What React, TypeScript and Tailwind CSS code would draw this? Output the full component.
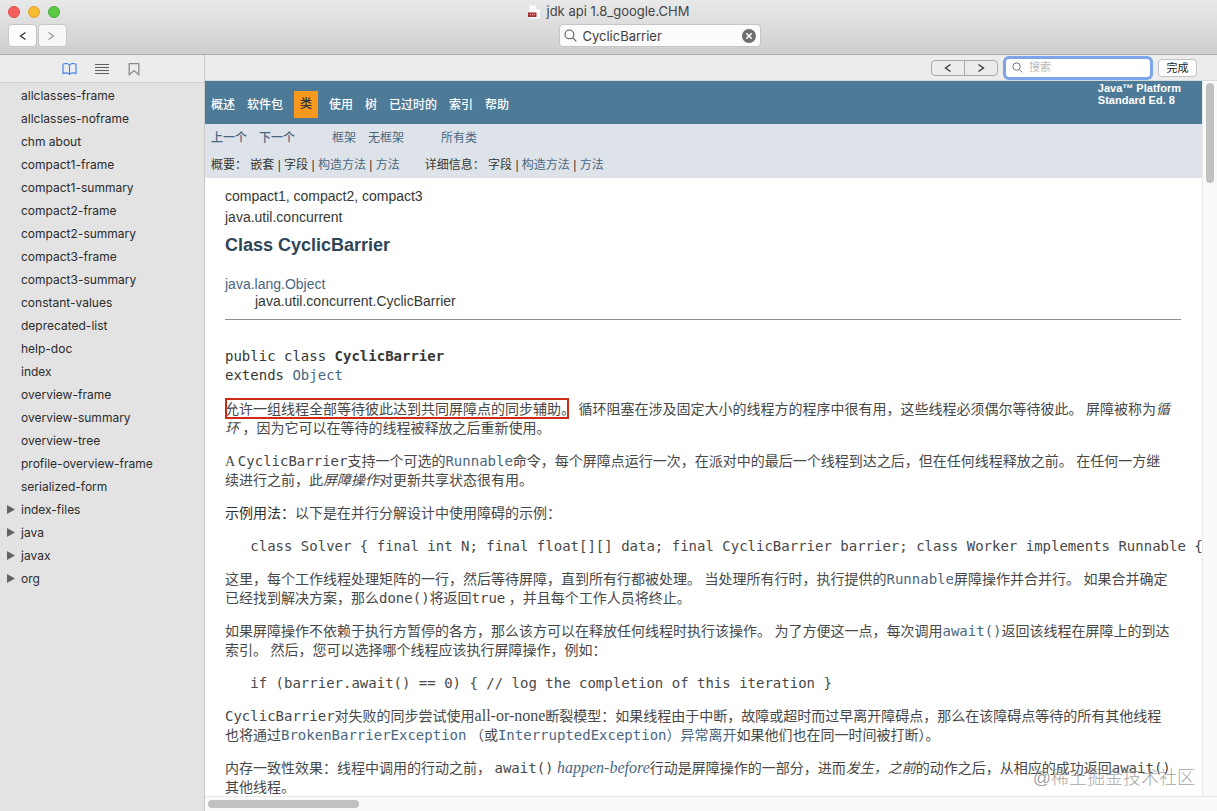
import type { ReactNode } from "react";

type TreeItem = { label: string; folder?: boolean };

const TREE: TreeItem[] = [
  { label: "allclasses-frame" },
  { label: "allclasses-noframe" },
  { label: "chm about" },
  { label: "compact1-frame" },
  { label: "compact1-summary" },
  { label: "compact2-frame" },
  { label: "compact2-summary" },
  { label: "compact3-frame" },
  { label: "compact3-summary" },
  { label: "constant-values" },
  { label: "deprecated-list" },
  { label: "help-doc" },
  { label: "index" },
  { label: "overview-frame" },
  { label: "overview-summary" },
  { label: "overview-tree" },
  { label: "profile-overview-frame" },
  { label: "serialized-form" },
  { label: "index-files", folder: true },
  { label: "java", folder: true },
  { label: "javax", folder: true },
  { label: "org", folder: true },
];

const NAV = ["概述", "软件包", "类", "使用", "树", "已过时的", "索引", "帮助"];

function Chevron({ dir, className }: { dir: "left" | "right"; className?: string }) {
  return (
    <svg width="8" height="10" viewBox="0 0 8 10" fill="none" stroke="currentColor" strokeWidth="1.3" className={className}>
      <path d={dir === "left" ? "M6.5 1.5 1.5 5l5 3.5" : "M1.5 1.5 6.5 5l-5 3.5"} />
    </svg>
  );
}

function SearchIcon({ className }: { className?: string }) {
  return (
    <svg viewBox="0 0 13 13" fill="none" stroke="currentColor" strokeWidth="1.1" className={className}>
      <circle cx="5.4" cy="5.4" r="4.4" />
      <path d="m8.7 8.7 3.6 3.6" />
    </svg>
  );
}

function Code({ children }: { children: ReactNode }) {
  return <code className="font-['DejaVu_Sans_Mono',monospace] leading-none">{children}</code>;
}

function DocLink({ children }: { children: ReactNode }) {
  return (
    <a href="#" className="text-[#4a6782]">
      {children}
    </a>
  );
}

function TitleBar() {
  return (
    <header className="border-b border-[#adadad] bg-linear-to-b from-[#e9e9e9] to-[#cfcfcf] pb-[7px]">
      <div className="flex h-6 items-center px-2">
        <div className="flex flex-1 gap-2">
          <button aria-label="关闭" className="size-3 rounded-full border border-[#df4a48] bg-[#f25f5c]" />
          <button aria-label="最小化" className="size-3 rounded-full border border-[#e0a223] bg-[#f7bb31]" />
          <button aria-label="缩放" className="size-3 rounded-full border border-[#46ab33] bg-[#5cc944]" />
        </div>
        <h1 className="flex items-center gap-1.5 text-[13px] text-[#454545]">
          <svg width="13" height="14" viewBox="0 0 13 14">
            <path d="M1.5.5h7L12 4v9.5H1.5z" fill="#fff" />
            <path d="M8.5.5V4H12z" fill="#d8d8d8" />
            <path d="M0 7.5h8.500V12H0z" fill="#a92f2c" />
            <path d="M2 9.700h1.200M4 9.700h1M5.700 9.700H7" stroke="#f2cfcf" strokeWidth="1" />
          </svg>
          jdk api 1.8_google.CHM
        </h1>
        <div className="flex-1" />
      </div>
      <div className="flex h-[23px] items-center">
        <div className="flex w-[102px] shrink-0 gap-px pl-2">
          <button aria-label="后退" className="flex h-[23px] w-[29px] items-center justify-center rounded-[4px] border border-[#c6c6c6] bg-[#fbfbfb] text-[#333]">
            <Chevron dir="left" />
          </button>
          <button aria-label="前进" className="flex h-[23px] w-[29px] items-center justify-center rounded-[4px] border border-[#c6c6c6] bg-[#f7f7f7] pr-1 text-[#999]">
            <Chevron dir="right" />
          </button>
        </div>
        <div className="flex flex-1 justify-center">
          <label className="flex h-[23px] w-[202px] items-center gap-1.5 rounded-[4px] border border-[#c6c6c6] bg-[#fbfbfb] px-1 text-[#5a5a5a]">
            <SearchIcon className="size-[13px] shrink-0" />
            <input
              aria-label="搜索文档"
              defaultValue="CyclicBarrier"
              className="min-w-0 flex-1 bg-transparent pt-0.5 text-[13px] text-[#3f3f3f] outline-none"
            />
            <button aria-label="清除">
              <svg width="14" height="14" viewBox="0 0 14 14">
                <circle cx="7" cy="7" r="7" fill="#6e6e6e" />
                <path d="m4.300 4.300 5.400 5.400m0-5.400-5.400 5.400" stroke="#fff" strokeWidth="1.500" />
              </svg>
            </button>
          </label>
        </div>
      </div>
    </header>
  );
}

function Sidebar() {
  return (
    <aside className="flex w-[205px] shrink-0 flex-col border-r border-[#c9c9c9] bg-[#e3e3e3]">
      <div className="flex h-7 items-center gap-[17px] border-b border-[#cfcfcf] bg-[#ececec] pl-[62px]">
        <button aria-label="目录" className="text-[#3f7fee]">
          <svg width="15" height="12" viewBox="0 0 15 12" fill="none" stroke="currentColor" strokeWidth="1.100">
            <path d="M7.500 2C6.300.7 3.300.3 1 1.200v9.300c2.300-.8 5.300-.5 6.500.8 1.200-1.300 4.200-1.600 6.500-.8V1.200C11.700.3 8.700.7 7.500 2zM7.500 2v9.300" />
          </svg>
        </button>
        <button aria-label="索引" className="text-[#606060]">
          <svg width="16" height="12" viewBox="0 0 16 12" stroke="currentColor" strokeWidth="1">
            <path d="M1 1.500h14M1 4.500h14M1 7.500h14M1 10.500h14" />
          </svg>
        </button>
        <button aria-label="书签" className="text-[#8c8c8c]">
          <svg width="14" height="14" viewBox="0 0 14 14" fill="none" stroke="currentColor" strokeWidth="1.300">
            <path d="M2.200 1.700h9.600v11L7 8.500l-4.800 4.200z" />
          </svg>
        </button>
      </div>
      <ul className="min-h-0 flex-1 overflow-hidden pt-px text-xs text-[#2b2b2b]">
        {TREE.map((item) => (
          <li key={item.label}>
            <a href="#" className="flex h-[23px] items-center">
              <span className="w-[21px] shrink-0 pl-[7px] text-[#636363]">
                {item.folder && (
                  <svg width="8" height="9" viewBox="0 0 8 9" fill="currentColor">
                    <path d="M0 0v9l8-4.500z" />
                  </svg>
                )}
              </span>
              {item.label}
            </a>
          </li>
        ))}
      </ul>
    </aside>
  );
}

function FindBar() {
  return (
    <div className="flex h-[26px] shrink-0 items-center justify-end gap-2 border-b border-[#d5dbdb] bg-[#ececec] pr-5 text-xs">
      <div className="flex h-4 w-[67px] divide-x divide-[#a9a9a9] rounded-[4px] border border-[#a9a9a9] text-[#333]">
        <button aria-label="上一个匹配" className="flex flex-1 items-center justify-center">
          <Chevron dir="left" />
        </button>
        <button aria-label="下一个匹配" className="flex flex-1 items-center justify-center">
          <Chevron dir="right" />
        </button>
      </div>
      <label className="flex h-[18px] w-36 items-center gap-1.5 rounded-[3px] bg-white px-1.5 text-[#6b6b6b] ring-3 ring-[#7ba4ea]">
        <SearchIcon className="size-[11px] shrink-0" />
        <input aria-label="页内搜索" placeholder="搜索" className="min-w-0 flex-1 bg-transparent text-[11px] outline-none placeholder:text-[#b9b9b9]" />
      </label>
      <button className="h-[18px] w-[39px] rounded-[4px] border border-[#c2c2c2] bg-white text-[11px] leading-4 text-[#222]">完成</button>
    </div>
  );
}

function DocNav() {
  return (
    <nav className="text-xs">
      <div className="flex h-[43px] justify-between bg-[#4d7a97] pl-1.5 pr-[21px] font-medium text-white">
        <ul className="flex items-center gap-3 pt-1">
          {NAV.map((label) =>
            label === "类" ? (
              <li key={label} className="-mx-px bg-[#f8981d] px-1.5 leading-[27px] text-[#253441]">
                {label}
              </li>
            ) : (
              <li key={label}>
                <a href="#">{label}</a>
              </li>
            )
          )}
        </ul>
        <strong className="pt-px text-[11px] leading-3">
          Java™ Platform
          <br />
          Standard Ed. 8
        </strong>
      </div>
      <div className="h-[54px] bg-[#dee3e9] pt-px pl-1.5 leading-[27px] text-[#353833]">
        <div className="flex gap-[37px]">
          <div className="flex gap-3 font-medium">
            <DocLink>上一个</DocLink>
            <DocLink>下一个</DocLink>
          </div>
          <div className="flex gap-3">
            <DocLink>框架</DocLink>
            <DocLink>无框架</DocLink>
          </div>
          <DocLink>所有类</DocLink>
        </div>
        <div className="flex gap-[25px]">
          <span>
            概要：&nbsp;嵌套 | 字段 | <DocLink>构造方法</DocLink> | <DocLink>方法</DocLink>
          </span>
          <span>
            详细信息：&nbsp;字段 | <DocLink>构造方法</DocLink> | <DocLink>方法</DocLink>
          </span>
        </div>
      </div>
    </nav>
  );
}

function ClassDoc() {
  return (
    <article className="px-5 pt-2 pr-[21px] text-sm text-[#353833]">
      <div className="leading-[21px]">compact1, compact2, compact3</div>
      <div className="leading-[21px]">java.util.concurrent</div>
      <h2 className="pt-[3px] text-lg leading-7 font-bold text-[#2c4557]">Class CyclicBarrier</h2>
      <div className="pt-[17px] leading-[17px]">
        <DocLink>java.lang.Object</DocLink>
        <div className="pl-[30px]">java.util.concurrent.CyclicBarrier</div>
      </div>
      <hr className="mt-[9px] mb-[27px] border-[#8f8f8f]" />
      <pre className="font-['DejaVu_Sans_Mono',monospace] leading-[19px]">
        public class <b>CyclicBarrier</b>
        {"\n"}extends <DocLink>Object</DocLink>
      </pre>
      <div className="flex flex-col gap-3.5 pt-[15px] font-['Liberation_Serif','Noto_Sans_CJK_SC',serif] leading-[19px] text-[#484848] [&>p]:pr-2">
        <p>
          <span className="relative">
            允许一组线程全部等待彼此达到共同屏障点的同步辅助。
            <span className="absolute -top-1 right-1.5 -bottom-0.5 left-0 border-2 border-[#cf2a14]" />
          </span>{" "}
          循环阻塞在涉及固定大小的线程方的程序中很有用，这些线程必须偶尔等待彼此。 屏障被称为<em>循环</em> ，因为它可以在等待的线程被释放之后重新使用。
        </p>
        <p>
          A <Code>CyclicBarrier</Code>支持一个可选的
          <DocLink>
            <Code>Runnable</Code>
          </DocLink>
          命令，每个屏障点运行一次，在派对中的最后一个线程到达之后，但在任何线程释放之前。 在任何一方继续进行之前，此<em>屏障操作</em>对更新共享状态很有用。
        </p>
        <p>
          <span className="text-[#2e2e2e]">示例用法：</span>以下是在并行分解设计中使用障碍的示例：
        </p>
        <pre className="font-['DejaVu_Sans_Mono',monospace] leading-[19px]">
          {"   class Solver { final int N; final float[][] data; final CyclicBarrier barrier; class Worker implements Runnable {"}
        </pre>
        <p>
          这里，每个工作线程处理矩阵的一行，然后等待屏障，直到所有行都被处理。 当处理所有行时，执行提供的
          <DocLink>
            <Code>Runnable</Code>
          </DocLink>
          屏障操作并合并行。 如果合并确定已经找到解决方案，那么<Code>done()</Code>将返回<Code>true</Code> ，并且每个工作人员将终止。
        </p>
        <p>
          如果屏障操作不依赖于执行方暂停的各方，那么该方可以在释放任何线程时执行该操作。 为了方便这一点，每次调用
          <DocLink>
            <Code>await()</Code>
          </DocLink>
          返回该线程在屏障上的到达索引。 然后，您可以选择哪个线程应该执行屏障操作，例如：
        </p>
        <pre className="font-['DejaVu_Sans_Mono',monospace] leading-[19px]">
          {"   if (barrier.await() == 0) { // log the completion of this iteration }"}
        </pre>
        <p>
          <Code>CyclicBarrier</Code>对失败的同步尝试使用<span className="text-base leading-none">all-or-none</span>
          断裂模型：如果线程由于中断，故障或超时而过早离开障碍点，那么在该障碍点等待的所有其他线程也将通过
          <DocLink>
            <Code>BrokenBarrierException</Code>
          </DocLink>{" "}
          （或
          <DocLink>
            <Code>InterruptedException</Code>）异常离开
          </DocLink>
          如果他们也在同一时间被打断）。
        </p>
        <p>
          内存一致性效果：线程中调用的行动之前， <Code>await()</Code>{" "}
          <DocLink>
            <i className="text-base leading-none">happen-before</i>
          </DocLink>
          行动是屏障操作的一部分，进而<em>发生，之前</em>的动作之后，从相应的成功返回<Code>await()</Code>其他线程。
        </p>
      </div>
    </article>
  );
}

export default function App() {
  return (
    <div className="flex h-screen flex-col overflow-hidden bg-white font-['Inter','Noto_Sans_CJK_SC',sans-serif]">
      <TitleBar />
      <div className="flex min-h-0 flex-1">
        <Sidebar />
        <div className="flex min-w-0 flex-1 flex-col">
          <FindBar />
          <div className="flex min-h-0 flex-1">
            <main className="relative min-w-0 flex-1 overflow-hidden font-['Liberation_Sans','Noto_Sans_CJK_SC',sans-serif]">
              <DocNav />
              <ClassDoc />
              <div className="absolute right-[7px] bottom-1 text-lg font-light text-[#8c8c8c]/80">@稀土掘金技术社区</div>
            </main>
            <div className="w-[15px] border-l border-[#e8e8e8] bg-[#fafafa] pt-0.5 pl-[3px]">
              <div className="h-[100px] w-2 rounded-full bg-[#c1c1c1]" />
            </div>
          </div>
          <div className="h-[15px] shrink-0 border-t border-[#e8e8e8] bg-[#fafafa] pt-[3px] pl-[3px]">
            <div className="h-2 w-[151px] rounded-full bg-[#c1c1c1]" />
          </div>
        </div>
      </div>
    </div>
  );
}
